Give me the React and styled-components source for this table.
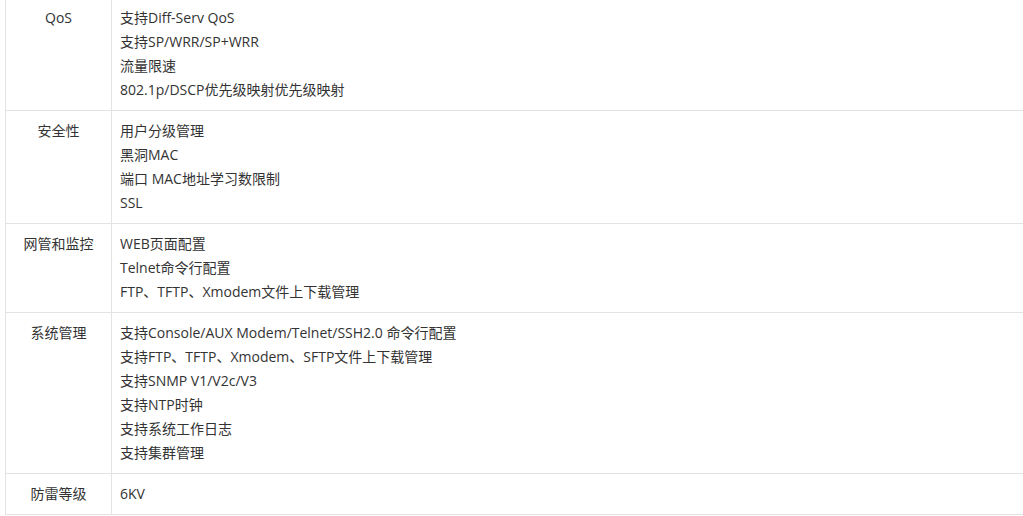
import React from "react";
import styled, { createGlobalStyle } from "styled-components";

const Global = createGlobalStyle`
  html, body { margin: 0; padding: 0; background: #fff; overflow: hidden; }
  body { font-family: "Open Sans", "Noto Sans CJK SC", sans-serif; }
`;

const Page = styled.div`
  padding-left: 5px;
  margin-top: -3px;
  width: 1060px;
`;

const Table = styled.table`
  border-collapse: collapse;
  width: 1060px;
  font-size: 14px;
  line-height: 24px;
  color: #333;
`;

const Row = styled.tr``;

const Cell = styled.td`
  border: 1px solid #e3e3e3;
  padding: 8px;
  vertical-align: top;
  text-align: ${(p) => (p.$label ? "center" : "left")};
  width: ${(p) => (p.$label ? "89px" : "auto")};
`;

const Line = styled.div`
  white-space: nowrap;
`;

const rows = [
  ["QoS", ["支持Diff-Serv QoS", "支持SP/WRR/SP+WRR", "流量限速", "802.1p/DSCP优先级映射优先级映射"]],
  ["安全性", ["用户分级管理", "黑洞MAC", "端口 MAC地址学习数限制", "SSL"]],
  ["网管和监控", ["WEB页面配置", "Telnet命令行配置", "FTP、TFTP、Xmodem文件上下载管理"]],
  [
    "系统管理",
    [
      "支持Console/AUX Modem/Telnet/SSH2.0 命令行配置",
      "支持FTP、TFTP、Xmodem、SFTP文件上下载管理",
      "支持SNMP V1/V2c/V3",
      "支持NTP时钟",
      "支持系统工作日志",
      "支持集群管理",
    ],
  ],
  ["防雷等级", ["6KV"]],
];

export default function App() {
  return (
    <Page>
      <Global />
      <Table>
        <tbody>
          {rows.map(([label, lines]) => (
            <Row key={label}>
              <Cell $label>{label}</Cell>
              <Cell>
                {lines.map((l) => (
                  <Line key={l}>{l}</Line>
                ))}
              </Cell>
            </Row>
          ))}
        </tbody>
      </Table>
    </Page>
  );
}
